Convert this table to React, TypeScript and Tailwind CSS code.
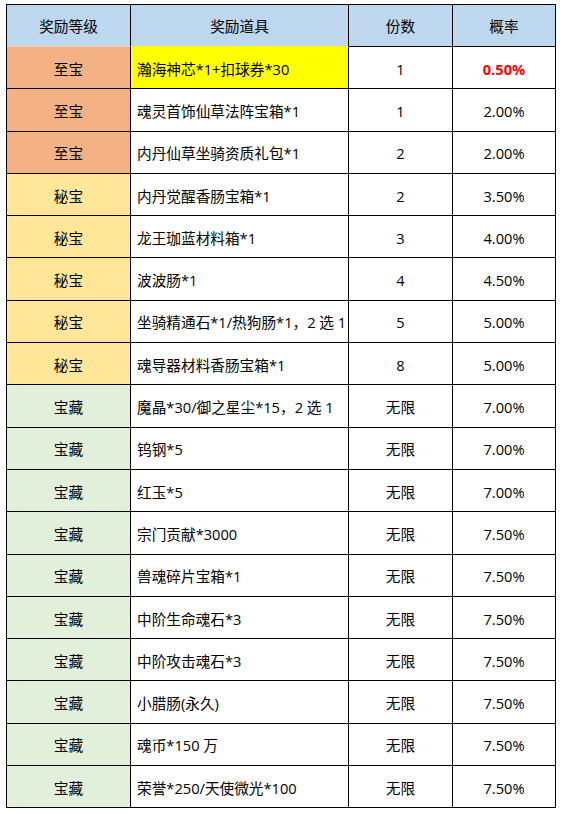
const rows: [string, string, string, string][] = [
  ["至宝", "瀚海神芯*1+扣球券*30", "1", "0.50%"],
  ["至宝", "魂灵首饰仙草法阵宝箱*1", "1", "2.00%"],
  ["至宝", "内丹仙草坐骑资质礼包*1", "2", "2.00%"],
  ["秘宝", "内丹觉醒香肠宝箱*1", "2", "3.50%"],
  ["秘宝", "龙王珈蓝材料箱*1", "3", "4.00%"],
  ["秘宝", "波波肠*1", "4", "4.50%"],
  ["秘宝", "坐骑精通石*1/热狗肠*1，2 选 1", "5", "5.00%"],
  ["秘宝", "魂导器材料香肠宝箱*1", "8", "5.00%"],
  ["宝藏", "魔晶*30/御之星尘*15，2 选 1", "无限", "7.00%"],
  ["宝藏", "钨钢*5", "无限", "7.00%"],
  ["宝藏", "红玉*5", "无限", "7.00%"],
  ["宝藏", "宗门贡献*3000", "无限", "7.50%"],
  ["宝藏", "兽魂碎片宝箱*1", "无限", "7.50%"],
  ["宝藏", "中阶生命魂石*3", "无限", "7.50%"],
  ["宝藏", "中阶攻击魂石*3", "无限", "7.50%"],
  ["宝藏", "小腊肠(永久)", "无限", "7.50%"],
  ["宝藏", "魂币*150 万", "无限", "7.50%"],
  ["宝藏", "荣誉*250/天使微光*100", "无限", "7.50%"],
];

const levelBg: Record<string, string> = {
  "至宝": "bg-[#f4b183]",
  "秘宝": "bg-[#ffe699]",
  "宝藏": "bg-[#e2efda]",
};

export default function App() {
  return (
    <div className="min-h-screen bg-white pt-[4px] pl-[6px] text-[14.67px] text-black" style={{ fontFamily: '"Open Sans", "Noto Sans CJK SC", sans-serif' }}>
      <div className="w-[550px] border-l border-t border-black">
        <div className="flex h-[42px] bg-[#bdd7ee]">
          <div className="w-[124px] flex items-center justify-center border-r border-b border-r-black border-b-[#f8cbad]">奖励等级</div>
          <div className="w-[218px] flex items-center justify-center border-r border-b border-r-black border-b-[#ffff00]">奖励道具</div>
          <div className="w-[104px] flex items-center justify-center border-r border-b border-black">份数</div>
          <div className="w-[103px] flex items-center justify-center border-r border-b border-black">概率</div>
        </div>
        {rows.map(([lv, item, n, p], i) => (
          <div key={i} className="flex h-[42.3px]">
            <div className={`w-[124px] flex items-center justify-center pt-[2px] border-r border-b border-black ${levelBg[lv]}`}>{lv}</div>
            <div className={`w-[218px] flex items-center pl-[6px] pt-[2px] border-r border-b border-black ${i === 0 ? "bg-[#ffff00]" : "bg-white"}`}>{item}</div>
            <div className="w-[104px] flex items-center justify-center pt-[2px] border-r border-b border-black">{n}</div>
            <div className={`w-[103px] flex items-center justify-center pt-[2px] border-r border-b border-black ${i === 0 ? "text-[#ff0000] font-bold" : ""}`}>{p}</div>
          </div>
        ))}
      </div>
    </div>
  );
}
